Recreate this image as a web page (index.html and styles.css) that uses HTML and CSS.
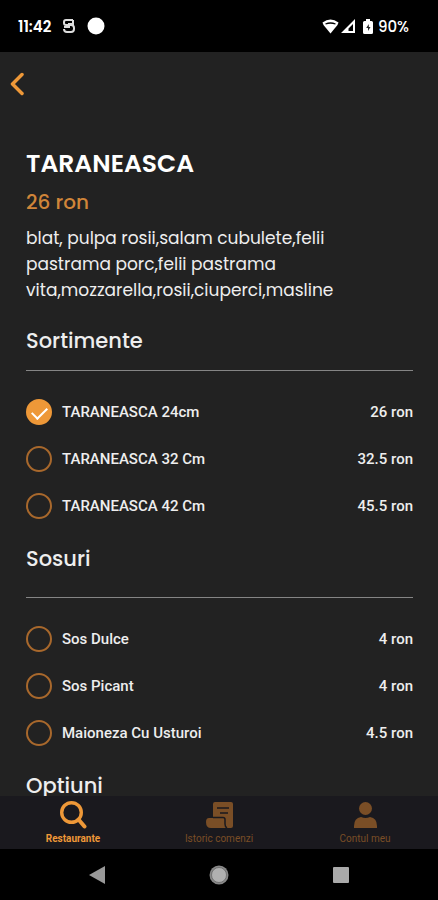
FILE: index.html
```html
<!DOCTYPE html>
<html lang="ro">
<head>
<meta charset="utf-8">
<meta name="viewport" content="width=device-width, initial-scale=1">
<title>TARANEASCA</title>
<link rel="stylesheet" href="styles.css">
</head>
<body>
<div class="app">
  <div class="status">
    <div class="status-group status-left">
      <span>11:42</span>
      <svg width="12" height="14" viewBox="0 0 12 14" fill="none" stroke="#ddd" stroke-width="2"><path d="M10 1H3Q1 1 1 3v1q0 2 2 2h5q3 0 3 3v1q0 3-3 3H4q-3 0-3-3M1 8h6M10 1v4H5"/></svg>
      <svg width="18" height="18" viewBox="0 0 18 18"><circle cx="9" cy="9" r="8.500" fill="#fff"/></svg>
    </div>
    <div class="status-group status-right">
      <svg width="17" height="15" viewBox="0 0 17 15"><path fill="#fff" d="M.500 3.500Q8.500-2.500 16.500 3.500L15.500 6 8.500 14.500 1.500 6Z"/><path d="M3.500 5q5-2 10 0" fill="none" stroke="#000" stroke-width="1.300"/></svg>
      <svg width="14" height="14" viewBox="0 0 14 14"><path fill="#fff" fill-rule="evenodd" d="M14 0v14H0ZM12 5v7H7.500V9.500Z"/></svg>
      <svg class="battery" width="10" height="15" viewBox="0 0 10 15"><path fill="#fff" d="M3 0h4v2h1.500Q10 2 10 3.500v10q0 1.500-1.500 1.500h-7Q0 15 0 13.500v-10Q0 2 1.500 2H3Z"/><path fill="#222" d="M5.800 5 3.200 9h1.800v3l2.500-4h-1.700Z"/></svg>
      <span>90%</span>
    </div>
  </div>

  <header class="topbar">
    <button class="back" type="button" aria-label="Inapoi">
      <svg width="14" height="24" viewBox="0 0 14 24" fill="none" stroke="#ee9838" stroke-width="3.500" stroke-linecap="round" stroke-linejoin="round"><path d="M12 2.500 2.500 12l9.500 9.500"/></svg>
    </button>
  </header>

  <main class="content">
    <h1>TARANEASCA</h1>
    <p class="price">26 ron</p>
    <p class="description">blat, pulpa rosii,salam cubulete,felii pastrama porc,felii pastrama vita,mozzarella,rosii,ciuperci,masline</p>

    <section>
      <h2>Sortimente</h2>
      <div class="options">
        <label class="option"><input type="radio" name="size" checked><span class="name">TARANEASCA 24cm</span><span>26 ron</span></label>
        <label class="option"><input type="radio" name="size"><span class="name">TARANEASCA 32 Cm</span><span>32.5 ron</span></label>
        <label class="option"><input type="radio" name="size"><span class="name">TARANEASCA 42 Cm</span><span>45.5 ron</span></label>
      </div>
    </section>

    <section>
      <h2 class="spaced">Sosuri</h2>
      <div class="options">
        <label class="option"><input type="checkbox"><span class="name">Sos Dulce</span><span>4 ron</span></label>
        <label class="option"><input type="checkbox"><span class="name">Sos Picant</span><span>4 ron</span></label>
        <label class="option"><input type="checkbox"><span class="name">Maioneza Cu Usturoi</span><span>4.5 ron</span></label>
      </div>
    </section>

    <section>
      <h2 class="spaced">Optiuni</h2>
    </section>
  </main>

  <nav class="tabs">
    <a class="tab active" href="#restaurante">
      <svg width="28" height="28" viewBox="0 0 28 28" fill="none" stroke="currentColor"><circle cx="12.500" cy="11.500" r="9.800" stroke-width="3.400"/><path d="m19.500 18.500 6 7" stroke-width="4" stroke-linecap="round"/></svg>
      <span>Restaurante</span>
    </a>
    <a class="tab" href="#istoric">
      <svg width="28" height="28" viewBox="0 0 28 28"><path fill="currentColor" d="M10 1h16q2 0 2 2v22q0 2-2 2H6q-5 0-5-6 0-4 3-4h4V3q0-2 2-2Z"/><path d="M12 7h12M15 12h8M8 16.500h10q2 0 2 2V23q0 3 2 4" fill="none" stroke="#1a191e" stroke-width="1.500"/></svg>
      <span>Istoric comenzi</span>
    </a>
    <a class="tab" href="#cont">
      <svg width="28" height="28" viewBox="0 0 28 28" fill="currentColor"><circle cx="14.500" cy="7.500" r="6.500"/><path d="M3 27v-2q0-8 7-9 4.500 2 9 0 7 1 7 9v2Z"/></svg>
      <span>Contul meu</span>
    </a>
  </nav>

  <div class="system">
    <button type="button" aria-label="Back"><svg width="18" height="20" viewBox="0 0 18 20"><path fill="#999" d="M17 1v18L1 10Z"/></svg></button>
    <button type="button" aria-label="Home"><svg width="20" height="20" viewBox="0 0 20 20"><circle cx="10" cy="10" r="9.500" fill="#888"/><circle cx="10" cy="10" r="7.500" fill="#b0b0b0" stroke="#555" stroke-width=".6"/></svg></button>
    <button type="button" aria-label="Recents"><svg width="18" height="18" viewBox="0 0 18 18"><rect x="1" y="1" width="16" height="16" rx="1" fill="#aaa"/></svg></button>
  </div>
</div>
</body>
</html>
```
FILE: styles.css
```css
* { box-sizing: border-box; }

body {
  margin: 0;
  background: #222;
  color: #eee;
  font-family: Poppins, Inter, sans-serif;
}

.app {
  display: flex;
  flex-direction: column;
  height: 100vh;
}

svg { display: block; flex: none; }

button {
  display: flex;
  padding: 0;
  border: 0;
  background: none;
}

.status {
  display: flex;
  flex: none;
  justify-content: space-between;
  height: 52px;
  padding: 0 29px 0 18px;
  background: #000;
  color: #fff;
  font-size: 15px;
  font-weight: 600;
}

.status-group { display: flex; align-items: center; }
.status-left { gap: 12px; }
.status-right { gap: 2px; font-weight: 500; }
.battery { margin: 0 3px 0 6px; }

.topbar {
  display: flex;
  flex: none;
  align-items: center;
  height: 64px;
  padding: 0 10px;
}

.content {
  flex: 1;
  min-height: 0;
  padding: 28px 25px 0 26px;
  overflow: hidden;
}

h1, h2, p { margin: 0; }

h1 {
  color: #fff;
  font-size: 25px;
  font-weight: 600;
  line-height: 40px;
}

.price {
  margin-top: 5px;
  color: #d08539;
  font-size: 20px;
  font-weight: 500;
  line-height: 26px;
}

.description {
  max-width: 340px;
  margin: 10px 0 22px;
  font-size: 17px;
  line-height: 26px;
}

h2 {
  padding-bottom: 13px;
  border-bottom: 1px solid #858585;
  font-size: 21px;
  font-weight: 500;
  line-height: 32px;
}

.spaced { padding-bottom: 22px; }

.options { padding: 17px 0 14px; }

.option {
  display: flex;
  align-items: center;
  height: 47px;
  font-family: Roboto, sans-serif;
  font-size: 15px;
  font-weight: 500;
}

.option input {
  flex: none;
  width: 26px;
  height: 26px;
  margin: 0 10px 0 0;
  border: 2px solid #a8682c;
  border-radius: 50%;
  appearance: none;
}

.option input:checked {
  display: grid;
  place-items: center;
  border-color: #ee9838;
  background: #ee9838;
}

.option input:checked::after {
  width: 13px;
  height: 7px;
  margin-bottom: 1px;
  border: solid #fff;
  border-width: 0 0 2px 2px;
  content: "";
  rotate: -45deg;
}

.name { flex: 1; }

.tabs {
  display: grid;
  flex: none;
  grid-template-columns: repeat(3, 1fr);
  height: 53px;
  background: #1a191e;
}

.tab {
  display: flex;
  flex-direction: column;
  align-items: center;
  gap: 4px;
  padding-top: 5px;
  color: #7a4e26;
  font-family: Roboto, sans-serif;
  font-size: 10px;
  line-height: 12px;
  text-decoration: none;
}

.active { color: #ee9838; font-weight: 700; }

.system {
  display: flex;
  flex: none;
  align-items: center;
  justify-content: space-around;
  height: 51px;
  padding: 0 37px;
  background: #000;
}
```
